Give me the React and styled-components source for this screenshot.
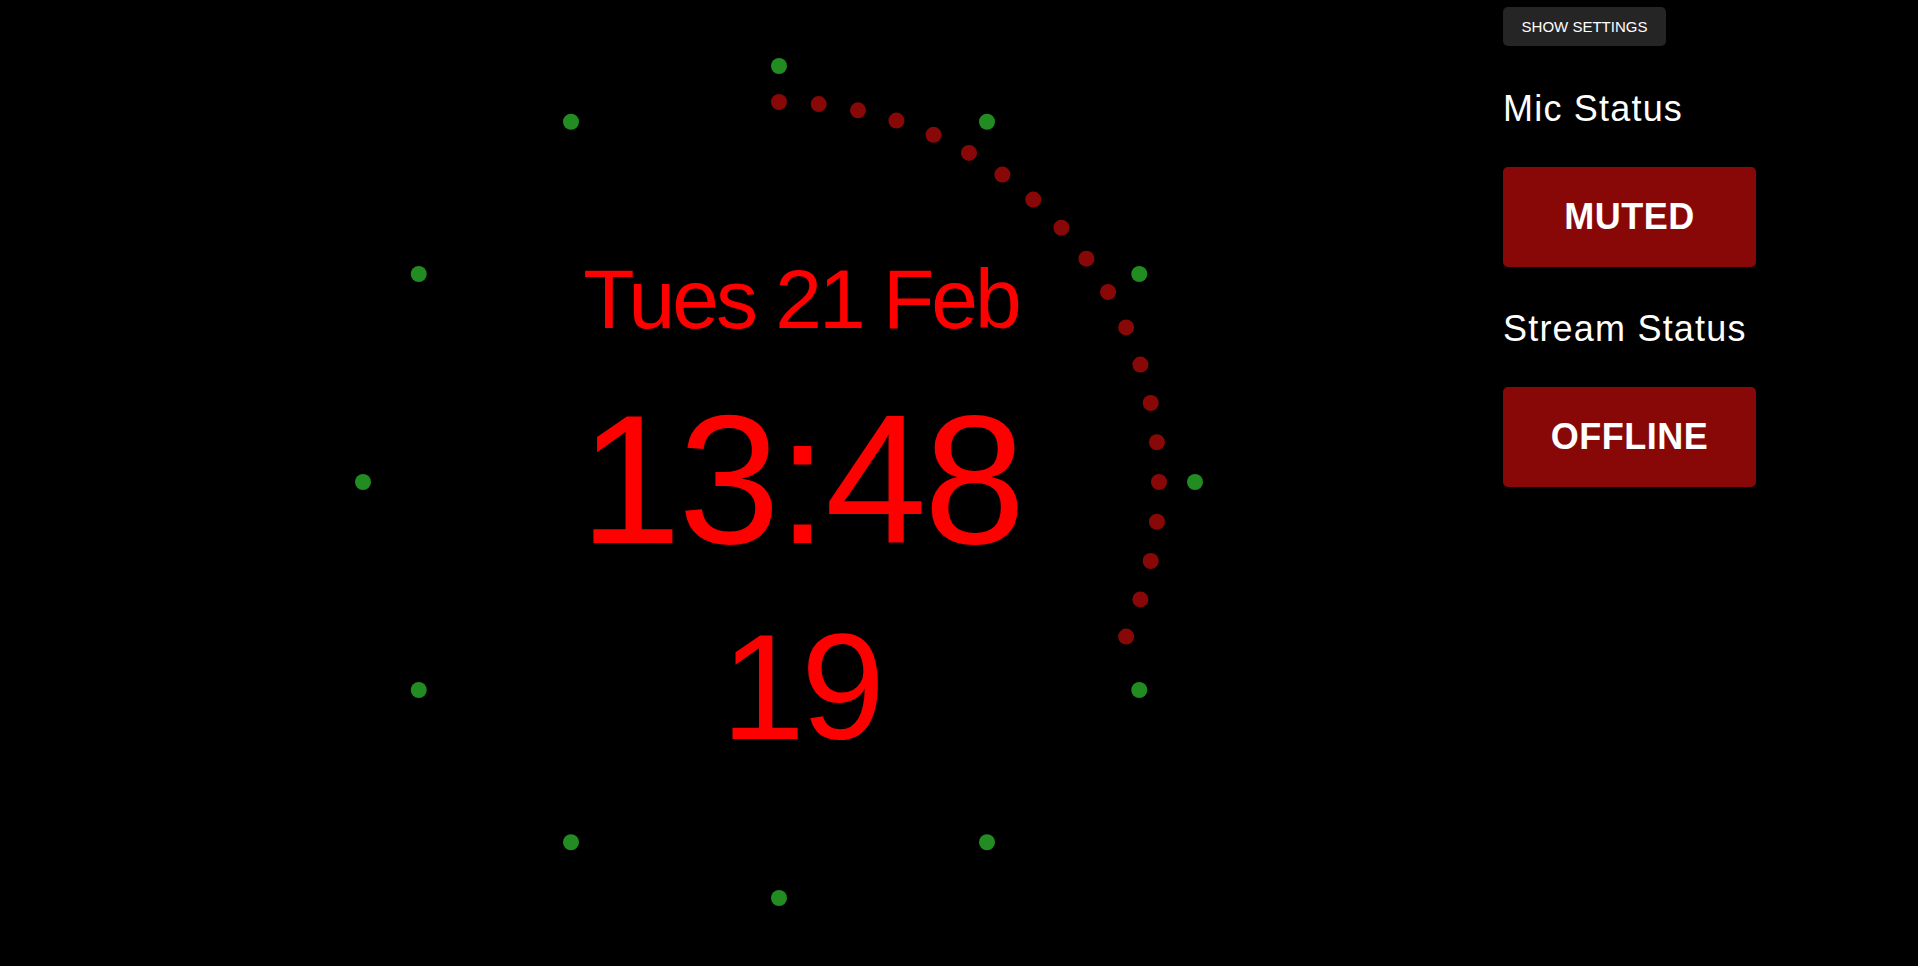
import styled, { createGlobalStyle } from "styled-components";

const GlobalStyle = createGlobalStyle`
    html, body {
        margin: 0;
        padding: 0;
        background: #000;
        height: 100%;
    }
    body {
        font-family: "Liberation Sans", Arial, sans-serif;
        color: #fff;
        overflow: hidden;
    }
`

const CX = 500;
const CY = 482;
const HOUR_R = 416;
const SEC_R = 380;
const DOT_R = 8;

const seconds = 19;

const polar = (r, deg) => {
    const a = (deg * Math.PI) / 180;
    return [CX + r * Math.sin(a), CY - r * Math.cos(a)];
};

const Dial = () => {
    const hours = Array.from({ length: 12 }, (_, i) => polar(HOUR_R, i * 30));
    const ticks = Array.from({ length: seconds + 1 }, (_, i) => polar(SEC_R, i * 6));
    return (
        <DialSvg viewBox="0 0 1000 966" width="1000" height="966">
            {hours.map(([x, y], i) => (
                <circle key={`h${i}`} cx={x} cy={y} r={DOT_R} fill="#228b22" />
            ))}
            {ticks.map(([x, y], i) => (
                <circle key={`s${i}`} cx={x} cy={y} r={DOT_R} fill="#880808" />
            ))}
        </DialSvg>
    );
};

const App = () => {
    return (
        <>
            <GlobalStyle />
            <Page>
                <ClockArea>
                    <Dial />
                    <Readout>
                        <DateLine>Tues 21 Feb</DateLine>
                        <TimeLine>13:48</TimeLine>
                        <SecondsLine>{seconds}</SecondsLine>
                    </Readout>
                </ClockArea>

                <Sidebar>
                    <SettingsButton>SHOW SETTINGS</SettingsButton>
                    <StatusLabel>Mic Status</StatusLabel>
                    <StatusBox>MUTED</StatusBox>
                    <StatusLabel>Stream Status</StatusLabel>
                    <StatusBox>OFFLINE</StatusBox>
                </Sidebar>
            </Page>
        </>
    );
};

export default App;

const Page = styled.div`
    display: flex;
    width: 1918px;
    height: 966px;
    background: #000;
`

const ClockArea = styled.div`
    flex: 0 0 1000px;
    margin-left: 279px;
    display: grid;
    height: 966px;
    > * {
        grid-area: 1 / 1;
    }
`

const DialSvg = styled.svg`
    display: block;
`

const Readout = styled.div`
    display: flex;
    flex-direction: column;
    align-items: center;
    padding-top: 257px;
    padding-left: 44px;
    color: #ff0000;
    line-height: 1;
`

const DateLine = styled.div`
    font-size: 84px;
    letter-spacing: -3px;
`

const TimeLine = styled.div`
    font-size: 183px;
    margin-top: 47px;
    letter-spacing: -3px;
`

const SecondsLine = styled.div`
    font-size: 151px;
    margin-top: 40px;
    letter-spacing: -4px;
`

const Sidebar = styled.div`
    margin-left: 224px;
    width: 253px;
    padding-top: 7px;
    display: flex;
    flex-direction: column;
    align-items: flex-start;
`

const SettingsButton = styled.button`
    width: 163px;
    height: 39px;
    border: none;
    border-radius: 5px;
    background: #252525;
    color: #fff;
    font-family: "Liberation Sans", Arial, sans-serif;
    font-size: 15px;
    padding: 0;
    cursor: pointer;
`

const StatusLabel = styled.div`
    font-size: 36px;
    line-height: 1;
    letter-spacing: 1.2px;
    margin-top: 45px;
    margin-bottom: 40px;
    &:nth-of-type(n + 2) {
        margin-top: 0;
    }
`

const StatusBox = styled.div`
    display: flex;
    align-items: center;
    justify-content: center;
    width: 253px;
    height: 100px;
    border-radius: 5px;
    background: #880808;
    color: #fff;
    font-size: 36px;
    font-weight: 700;
    letter-spacing: 0.5px;
    margin-bottom: 44px;
`
